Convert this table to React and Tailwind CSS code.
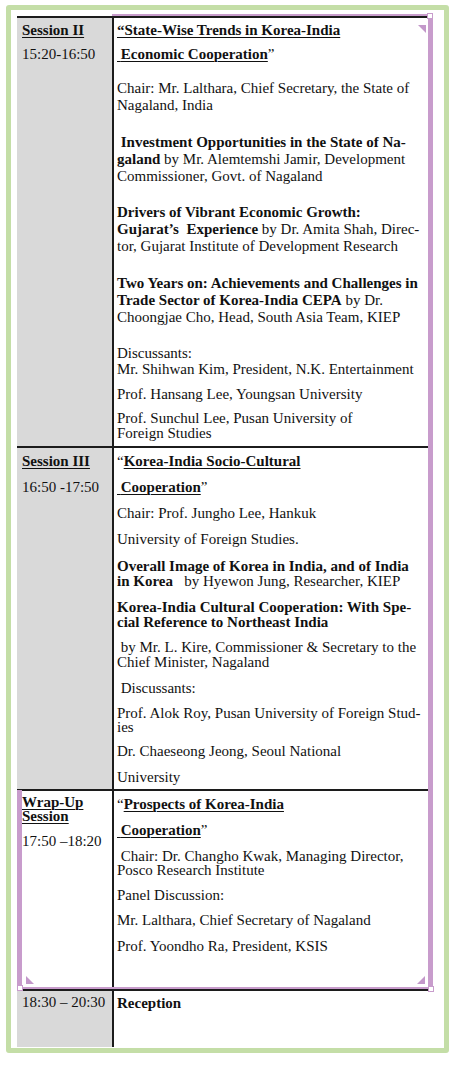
import React from 'react'

const U = ({ children }) => (
  <span className="font-bold underline decoration-1 underline-offset-[2px]">{children}</span>
)

const B = ({ children }) => <span className="font-bold">{children}</span>

const Tri = ({ className, points }) => (
  <svg className={className} width="8" height="8" viewBox="0 0 8 8">
    <polygon points={points} fill="#c398ca" />
  </svg>
)

const App = () => {
  return (
    <div className="min-h-screen bg-white pt-[5px] pl-[6px] font-['Liberation_Serif','Times_New_Roman',serif]">
      <div className="w-[443px] h-[1048px] rounded-[3px] border-[5px] border-[#c4dea7] pt-[6px] pl-[6px]">
        <div className="relative w-[416px] text-[15px] text-[#111] whitespace-nowrap">

          {/* Session II */}
          <div className="grid grid-cols-[95px_1fr] h-[430px] border-t-2 border-[#1c1c1c]">
            <div className="bg-[#d9d9d9] pl-[5px] leading-[24px]">
              <div><U>Session II</U></div>
              <div>15:20-16:50</div>
            </div>
            <div className="border-l-2 border-[#1c1c1c] pl-[3px]">
              <p className="leading-[24px]">
                <U>“State-Wise Trends in Korea-India</U><br />
                <U>{'\u00a0'}Economic Cooperation</U>”
              </p>
              <p className="leading-[17px] mt-[14px]">
                Chair: Mr. Lalthara, Chief Secretary, the State of<br />
                Nagaland, India
              </p>
              <p className="leading-[17px] mt-[20px]">
                <B>{'\u00a0'}Investment Opportunities in the State of Na-</B><br />
                <B>galand</B> by Mr. Alemtemshi Jamir, Development<br />
                Commissioner, Govt. of Nagaland
              </p>
              <p className="leading-[17px] mt-[19px]">
                <B>Drivers of Vibrant Economic Growth:</B><br />
                <B>Gujarat’s{'\u00a0'} Experience</B> by Dr. Amita Shah, Direc-<br />
                tor, Gujarat Institute of Development Research
              </p>
              <p className="leading-[17px] mt-[20px]">
                <B>Two Years on: Achievements and Challenges in</B><br />
                <B>Trade Sector of Korea-India CEPA</B> by Dr.<br />
                Choongjae Cho, Head, South Asia Team, KIEP
              </p>
              <p className="leading-[16px] mt-[19px]">
                Discussants:<br />
                Mr. Shihwan Kim, President, N.K. Entertainment
              </p>
              <p className="leading-[16px] mt-[9px]">Prof. Hansang Lee, Youngsan University</p>
              <p className="leading-[15px] mt-[9px]">
                Prof. Sunchul Lee, Pusan University of<br />
                Foreign Studies
              </p>
            </div>
          </div>

          {/* Session III */}
          <div className="grid grid-cols-[95px_1fr] h-[343px] border-t-2 border-[#1c1c1c]">
            <div className="bg-[#d9d9d9] pl-[5px] leading-[26px]">
              <div><U>Session III</U></div>
              <div>16:50 -17:50</div>
            </div>
            <div className="border-l-2 border-[#1c1c1c] pl-[3px]">
              <p className="leading-[26px]">
                “<U>Korea-India Socio-Cultural</U><br />
                <U>{'\u00a0'}Cooperation</U>”
              </p>
              <p className="leading-[26px]">Chair: Prof. Jungho Lee, Hankuk</p>
              <p className="leading-[26px]">University of Foreign Studies.</p>
              <p className="leading-[15px] mt-[7px]">
                <B>Overall Image of Korea in India, and of India</B><br />
                <B>in Korea</B>{'\u00a0\u00a0'} by Hyewon Jung, Researcher, KIEP
              </p>
              <p className="leading-[15px] mt-[11px]">
                <B>Korea-India Cultural Cooperation: With Spe-</B><br />
                <B>cial Reference to Northeast India</B>
              </p>
              <p className="leading-[15px] mt-[10px]">
                {'\u00a0'}by Mr. L. Kire, Commissioner &amp; Secretary to the<br />
                Chief Minister, Nagaland
              </p>
              <p className="leading-[15px] mt-[11px]">{'\u00a0'}Discussants:</p>
              <p className="leading-[14px] mt-[10px]">
                Prof. Alok Roy, Pusan University of Foreign Stud-<br />
                ies
              </p>
              <p className="leading-[15px] mt-[10px]">Dr. Chaeseong Jeong, Seoul National</p>
              <p className="leading-[15px] mt-[11px]">University</p>
            </div>
          </div>

          {/* Wrap-Up */}
          <div className="grid grid-cols-[95px_1fr] h-[200px] border-t-2 border-[#1c1c1c]">
            <div className="bg-white pl-[5px]">
              <div className="leading-[14px] mt-[4px]">
                <U>Wrap-Up</U><br />
                <U>Session</U>
              </div>
              <div className="leading-[15px] mt-[11px]">17:50 –18:20</div>
            </div>
            <div className="border-l-2 border-[#1c1c1c] pl-[3px]">
              <p className="leading-[26px]">
                “<U>Prospects of Korea-India</U><br />
                <U>{'\u00a0'}Cooperation</U>”
              </p>
              <p className="leading-[14px] mt-[6px]">
                {'\u00a0'}Chair: Dr. Changho Kwak, Managing Director,<br />
                Posco Research Institute
              </p>
              <p className="leading-[15px] mt-[11px]">Panel Discussion:</p>
              <p className="leading-[15px] mt-[10px]">Mr. Lalthara, Chief Secretary of Nagaland</p>
              <p className="leading-[15px] mt-[11px]">Prof. Yoondho Ra, President, KSIS</p>
            </div>
          </div>

          {/* Reception */}
          <div className="grid grid-cols-[95px_1fr] h-[58px] border-t-2 border-[#1c1c1c]">
            <div className="bg-[#d9d9d9] pl-[5px]">
              <div className="leading-[15px] mt-[4px]">18:30 – 20:30</div>
            </div>
            <div className="border-l-2 border-[#1c1c1c] pl-[3px]">
              <p className="leading-[15px] mt-[5px]"><B>Reception</B></p>
            </div>
          </div>

          {/* frame selection overlay */}
          <div className="absolute left-[95px] top-[-2px] w-[321px] h-[2px] bg-[#c89ccc]" />
          <div className="absolute left-[411px] top-[-2px] w-[5px] h-[975px] bg-[#c89ccc]" />
          <div className="absolute left-0 top-[971px] w-[416px] h-[2px] bg-[#c89ccc]" />
          <div className="absolute left-0 top-[774px] w-[5px] h-[199px] bg-[#c89ccc]" />
          <div className="absolute left-[410px] top-[-3px] w-[6px] h-[6px] border border-[#c89ccc] bg-white" />
          <div className="absolute left-0 top-[969px] w-[6px] h-[6px] border border-[#c89ccc] bg-white" />
          <div className="absolute left-[411px] top-[970px] w-[6px] h-[6px] border border-[#c89ccc] bg-white" />
          <Tri className="absolute left-[401px] top-[9px]" points="0,0 8,0 8,8" />
          <Tri className="absolute left-[9px] top-[960px]" points="0,0 0,8 8,8" />
          <Tri className="absolute left-[400px] top-[960px]" points="8,0 8,8 0,8" />
        </div>
      </div>
    </div>
  )
}

export default App
